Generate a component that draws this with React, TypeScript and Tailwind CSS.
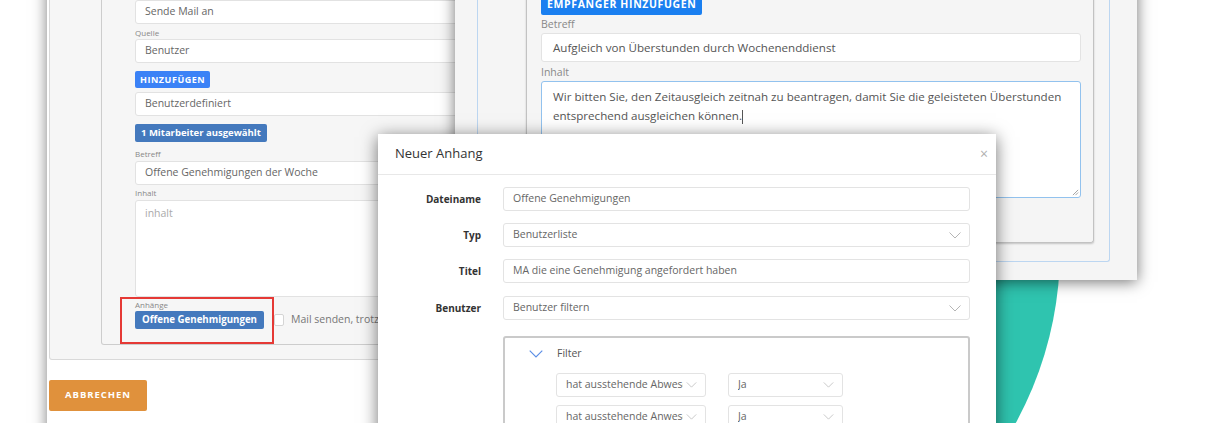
import React from 'react';

// --- Small pieces ---

const Chevron = ({ className = '' }: { className?: string }) => (
  <svg viewBox="0 0 12 7" className={className} fill="none" stroke="currentColor" strokeWidth="1">
    <polyline points="0.5,0.5 6,6 11.5,0.5" />
  </svg>
);

const SmallInput = ({ value, muted }: { value: string; muted?: boolean }) => (
  <div className={`h-[24px] w-[360px] bg-white border border-[#e2e2e2] rounded-[3px] pl-[9px] flex items-center text-[10.5px] ${muted ? 'text-[#aaa]' : 'text-[#666]'}`}>
    {value}
  </div>
);

const SmallLabel = ({ text, h, pt = 0 }: { text: string; h: number; pt?: number }) => (
  <div className="text-[8px] text-[#888] leading-none flex items-center" style={{ height: h, paddingTop: pt }}>
    {text}
  </div>
);

const ModalField = ({ label, value, select, mt }: { label: string; value: string; select?: boolean; mt: string }) => (
  <div className={`flex items-center ${mt}`}>
    <div className="w-[103px] text-right text-[10px] font-bold text-[#333]">{label}</div>
    <div className="ml-[22px] flex-1 h-[24px] border border-[#e3e3e3] rounded-[3px] flex items-center justify-between pl-[9px] pr-[8px] text-[10.5px] text-[#666]">
      <span>{value}</span>
      {select && <Chevron className="w-[12px] h-[7px] text-[#b5b5b5]" />}
    </div>
  </div>
);

const FilterSelect = ({ value, w, tw }: { value: string; w: string; tw: string }) => (
  <div className={`${w} h-[24px] border border-[#e3e3e3] rounded-[3px] flex items-center justify-between pl-[9px] pr-[8px] text-[10.5px] text-[#666] bg-white`}>
    <span className={`${tw} whitespace-nowrap overflow-hidden`}>{value}</span>
    <Chevron className="w-[11px] h-[6px] text-[#c0c0c0] shrink-0" />
  </div>
);

// --- Windows ---

const MailForm = () => (
  <div className="absolute left-[47px] top-[-40px] w-[460px] h-[480px] bg-white shadow-[0_0_14px_rgba(0,0,0,0.5)]">
    <div className="ml-[2px] h-[400px] border border-t-0 border-[#d9d9d9] rounded-b-[3px] bg-[#f6f6f6] pl-[51px]">
      <div className="h-[385px] border border-t-0 border-[#cdcdcd] rounded-b-[3px] bg-[#f6f6f6] pl-[33px] pt-[40px]">
        <SmallInput value="Sende Mail an" />
        <SmallLabel text="Quelle" h={15} pt={2} />
        <SmallInput value="Benutzer" />
        <button className="mt-[8px] h-[17px] px-[5px] rounded-[2px] bg-[#3b82f6] text-white text-[9px] font-bold tracking-[0.06em] flex items-center">
          HINZUFÜGEN
        </button>
        <div className="mt-[4px]">
          <SmallInput value="Benutzerdefiniert" />
        </div>
        <button className="mt-[8px] h-[18px] px-[6px] rounded-[2px] bg-[#4479bd] text-white text-[9.5px] font-bold flex items-center">
          1 Mitarbeiter ausgewählt
        </button>
        <SmallLabel text="Betreff" h={19} pt={4} />
        <SmallInput value="Offene Genehmigungen der Woche" />
        <SmallLabel text="Inhalt" h={15} pt={1} />
        <div className="h-[97px] w-[360px] bg-white border border-[#e2e2e2] rounded-[3px] pl-[9px] pt-[5px] text-[10.5px] text-[#aaa]">
          inhalt
        </div>
        <SmallLabel text="Anhänge" h={14} pt={2} />
        <div className="flex items-center">
          <button className="h-[18px] w-[129px] rounded-[2px] bg-[#4479bd] text-white text-[9.7px] font-bold flex items-center justify-center">
            Offene Genehmigungen
          </button>
          <div className="ml-[10px] w-[10px] h-[12px] bg-white border border-[#d5d5d5] rounded-[2px]" />
          <span className="ml-[7px] w-[88px] overflow-hidden text-[10.5px] text-[#777] whitespace-nowrap">Mail senden, trotz leerer Liste</span>
        </div>
      </div>
    </div>
    <button className="mt-[20px] ml-[2px] w-[98px] h-[31px] rounded-[2px] bg-[#e0913c] text-white text-[9.5px] font-bold tracking-[0.1em] flex items-center justify-center">
      ABBRECHEN
    </button>
    <div className="absolute left-[73px] top-[337px] w-[154px] h-[47px] border-2 border-[#e53935]" />
  </div>
);

const MailDraft = () => (
  <div className="absolute left-[455px] top-[-40px] w-[682px] h-[320px] bg-[#f5f5f5] shadow-[0_2px_14px_rgba(0,0,0,0.55)] pl-[22px] pr-[27px] pb-[18px]">
    <div className="h-full border border-t-0 border-[#bcd6f1] rounded-b-[3px] pl-[48px] pr-[15px] pb-[18px]">
      <div className="h-full border border-t-0 border-[#c2c2c2] rounded-b-[3px] shadow-[0_1px_2px_rgba(0,0,0,0.2)] pl-[14px] pr-[12px] pt-[35px]">
        <button className="h-[20px] px-[6px] rounded-[2px] bg-[#1a7ff0] text-white text-[10.5px] font-bold tracking-[0.06em] flex items-center">
          EMPFÄNGER HINZUFÜGEN
        </button>
        <div className="h-[18px] text-[10.5px] text-[#888] flex items-center pt-[2px]">Betreff</div>
        <div className="h-[29px] bg-white border border-[#e3e3e3] rounded-[3px] pl-[11px] flex items-center text-[11.6px] text-[#555]">
          Aufgleich von Überstunden durch Wochenenddienst
        </div>
        <div className="h-[19px] text-[10.5px] text-[#888] flex items-center pt-[3px]">Inhalt</div>
        <div className="relative h-[117px] bg-white border border-[#92c2ee] rounded-[3px] pl-[11px] pr-[8px] pt-[5px] text-[11.6px] leading-[19px] text-[#555]">
          Wir bitten Sie, den Zeitausgleich zeitnah zu beantragen, damit Sie die geleisteten Überstunden entsprechend ausgleichen können.
          <span className="inline-block w-[1px] h-[14px] bg-[#555] align-middle" />
          <svg viewBox="0 0 8 8" className="absolute right-[1px] bottom-[1px] w-[7px] h-[7px] text-[#999]" stroke="currentColor" strokeWidth="1">
            <line x1="7" y1="1" x2="1" y2="7" />
            <line x1="7" y1="4" x2="4" y2="7" />
          </svg>
        </div>
      </div>
    </div>
  </div>
);

const AttachmentModal = () => (
  <div className="absolute left-[378px] top-[134px] w-[618px] h-[320px] bg-white shadow-[0_3px_16px_rgba(0,0,0,0.55)]">
    <div className="h-[41px] border-b border-[#e8e8e8] flex items-center justify-between pl-[17px] pr-[8px]">
      <span className="text-[13px] text-[#333]">Neuer Anhang</span>
      <span className="text-[14px] text-[#b0b0b0] leading-none">×</span>
    </div>
    <div className="pt-[12px] pr-[26px]">
      <ModalField label="Dateiname" value="Offene Genehmigungen" mt="" />
      <ModalField label="Typ" value="Benutzerliste" select mt="mt-[12px]" />
      <ModalField label="Titel" value="MA die eine Genehmigung angefordert haben" mt="mt-[12px]" />
      <ModalField label="Benutzer" value="Benutzer filtern" select mt="mt-[13px]" />
      <div className="mt-[16px] ml-[125px] h-[120px] border-2 border-[#cacaca] rounded-[3px] pt-[9px]">
        <div className="flex items-center h-[14px]">
          <Chevron className="ml-[23px] w-[16px] h-[8px] text-[#5b8ee6]" />
          <span className="ml-[13px] text-[10.5px] text-[#555]">Filter</span>
        </div>
        <div className="mt-[12px] pl-[51px] flex flex-col gap-[8px]">
          <div className="flex gap-[22px]">
            <FilterSelect value="hat ausstehende Abwesenheiten" w="w-[150px]" tw="w-[117px]" />
            <FilterSelect value="Ja" w="w-[115px]" tw="w-[80px]" />
          </div>
          <div className="flex gap-[22px]">
            <FilterSelect value="hat ausstehende Anwesenheiten" w="w-[150px]" tw="w-[117px]" />
            <FilterSelect value="Ja" w="w-[115px]" tw="w-[80px]" />
          </div>
        </div>
      </div>
    </div>
  </div>
);

const App = () => {
  return (
    <div className="relative w-[1210px] h-[423px] overflow-hidden bg-white font-['Open_Sans',sans-serif]">
      <div className="absolute left-[340px] top-[-110px] w-[720px] h-[720px] rounded-full bg-[#2fc4af]" />
      <MailForm />
      <MailDraft />
      <AttachmentModal />
    </div>
  );
};

export default App;
